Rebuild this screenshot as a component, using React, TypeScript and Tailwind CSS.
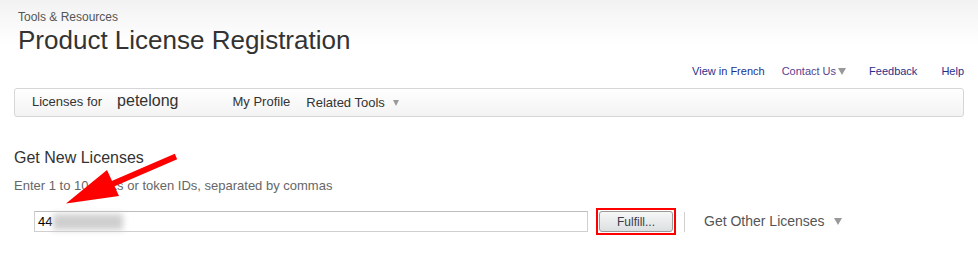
export default function App() {
  return (
    <div className="relative w-[978px] h-[253px] overflow-hidden bg-[linear-gradient(#f2f2f2,#ffffff_45px)] font-['Liberation_Sans',Arial,sans-serif] text-[#333]">
      {/* header */}
      <div className="pt-[10px] pl-[18px]">
        <div className="text-[12px] leading-[15px] text-[#555]">Tools &amp; Resources</div>
        <h1 className="text-[26px] leading-[30px] text-[#333]">Product License Registration</h1>
      </div>

      {/* utility links */}
      <div className="mt-[9px] flex justify-end pr-[14px] text-[11px] leading-[15px]">
        <a className="text-[#1f2f8c]">View in French</a>
        <a className="ml-[17px] flex items-center text-[#5a3e8e]">
          Contact Us
          <span className="ml-[2px] border-x-[4px] border-t-[7px] border-x-transparent border-t-[#999]" />
        </a>
        <a className="ml-[23px] text-[#1f2f8c]">Feedback</a>
        <a className="ml-[24px] text-[#1f2f8c]">Help</a>
      </div>

      {/* nav bar */}
      <div className="mt-[9px] ml-[14px] flex h-[29px] w-[950px] items-baseline rounded-[3px] border border-[#d6d6d6] bg-[linear-gradient(#ffffff,#f3f3f3)] pl-[17px] pt-[3px]">
        <span className="text-[13px] leading-[15px]">Licenses for</span>
        <span className="ml-[15px] text-[16px] leading-[18px]">petelong</span>
        <span className="ml-[54px] text-[13px] leading-[15px]">My Profile</span>
        <span className="relative top-[1px] ml-[16px] text-[13px] leading-[15px]">
          Related Tools
          <span className="ml-[8px] inline-block border-x-[3.5px] border-t-[6px] border-x-transparent border-t-[#999] align-[1px]" />
        </span>
      </div>

      {/* form */}
      <div className="pl-[14px]">
        <h2 className="mt-[31px] text-[16px] leading-[20px] text-[#333]">Get New Licenses</h2>
        <p className="mt-[10px] text-[13px] leading-[16px] text-[#666]">
          Enter 1 to 10 PAKs or token IDs, separated by commas
        </p>
        <div className="mt-[14px] flex items-center">
          <div className="ml-[20px] flex h-[21px] w-[554px] items-center border border-[#cfcfcf] border-t-[#bdbdbd] bg-white pl-[3px] text-[13px] text-black">
            44
            <span className="ml-[1px] h-[16px] w-[70px] bg-[#cfcfcf] blur-[3px]" />
          </div>
          <div className="ml-[8px] h-[27px] w-[80px] border-2 border-[#ff0000] p-px">
            <button className="flex h-full w-full items-center justify-center rounded-[3px] border border-[#9a9a9a] bg-[linear-gradient(#f7f7f7,#dcdfe0)] text-[12px] text-[#3b3b48]">
              Fulfill...
            </button>
          </div>
          <div className="ml-[8px] h-[20px] w-px bg-[#d0d0d0]" />
          <div className="ml-[19px] flex items-center text-[14px] text-[#555]">
            Get Other Licenses
            <span className="ml-[9px] border-x-[4px] border-t-[7px] border-x-transparent border-t-[#999]" />
          </div>
        </div>
      </div>

      {/* annotation arrow */}
      <svg className="absolute left-0 top-0" width="978" height="253" viewBox="0 0 978 253">
        <line x1="176" y1="156.5" x2="110" y2="185" stroke="#ff0000" strokeWidth="6" />
        <polygon points="66,203.5 107,170 119,196" fill="#ff0000" />
      </svg>
    </div>
  );
}
